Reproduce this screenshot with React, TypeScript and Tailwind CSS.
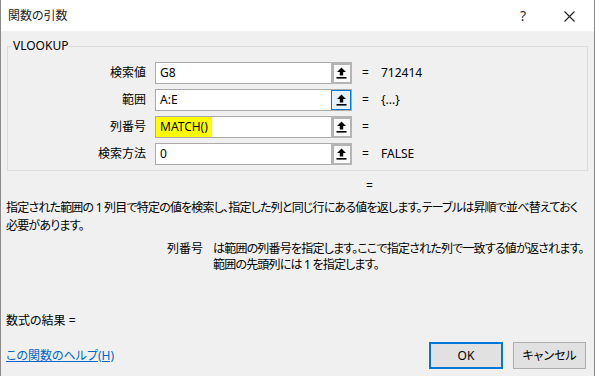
import React from 'react';

const rows = [
  { label: '検索値', value: 'G8', result: '712414', focused: false, highlight: false },
  { label: '範囲', value: 'A:E', result: '{...}', focused: true, highlight: false },
  { label: '列番号', value: 'MATCH()', result: '', focused: false, highlight: true },
  { label: '検索方法', value: '0', result: 'FALSE', focused: false, highlight: false },
];

function CollapseIcon() {
  return (
    <svg width="11" height="12" viewBox="0 0 11 12">
      <path d="M5.5 0.5 L10 5 H7.2 V8.5 H3.8 V5 H1 Z" fill="#000" />
      <rect x="0.5" y="10" width="10" height="1.6" fill="#000" />
    </svg>
  );
}

function RefEdit({ value, focused, highlight }: { value: string; focused: boolean; highlight: boolean }) {
  return (
    <div className="flex h-[22px] w-[197px]">
      <div className="flex-1 h-full border border-r-0 border-[#a9a9a9] bg-white flex items-stretch">
        <span className={`flex items-center pl-[4px] pr-[4px] text-black ${highlight ? 'bg-[#ffff00]' : ''}`}>{value}</span>
      </div>
      {focused ? (
        <div className="w-[21px] h-full border border-[#a9a9a9] border-l-0 bg-white flex items-center justify-center">
          <div className="w-[20px] h-[20px] border border-[#0078d7] bg-[#e5f1fb] flex items-center justify-center">
            <CollapseIcon />
          </div>
        </div>
      ) : (
        <div className="w-[21px] h-full bg-[#b4b4b4] flex items-center justify-center">
          <div className="w-[16px] h-[17px] bg-[#fafafa] flex items-center justify-center">
            <CollapseIcon />
          </div>
        </div>
      )}
    </div>
  );
}

export default function App() {
  return (
    <div
      className="w-[595px] h-[376px] bg-[#f0f0f0] border-x border-[#8a8a8a] flex flex-col text-[12px] text-black overflow-hidden [font-feature-settings:'palt']"
      style={{ fontFamily: '"Noto Sans", "Noto Sans CJK JP", sans-serif' }}
    >
      {/* title bar */}
      <div className="h-[31px] bg-white flex items-center pl-[7px] shrink-0">
        <span className="text-[12px] text-[#222]">関数の引数</span>
        <span className="ml-auto w-[46px] text-center text-[14px] text-[#333]">?</span>
        <span className="w-[46px] text-center mr-[2px] text-[#333]">
          <svg width="11" height="11" viewBox="0 0 11 11" className="inline-block">
            <path d="M0.5 0.5 L10.5 10.5 M10.5 0.5 L0.5 10.5" stroke="#222" strokeWidth="1.1" />
          </svg>
        </span>
      </div>

      {/* argument group */}
      <fieldset className="mt-[7px] mx-[6px] h-[133px] border border-[#dcdcdc] px-0 pb-0 pt-[8px] shrink-0">
        <legend className="ml-[4px] px-[1px] text-[12px] leading-[16px]">VLOOKUP</legend>
        <div className="flex flex-col gap-[5px]">
          {rows.map((r) => (
            <div key={r.label} className="flex items-center h-[22px]">
              <div className="w-[138px] text-right">{r.label}</div>
              <div className="ml-[9px]">
                <RefEdit value={r.value} focused={r.focused} highlight={r.highlight} />
              </div>
              <div className="ml-[10px] w-[18px]">=</div>
              <div className="ml-[1px]">{r.result}</div>
            </div>
          ))}
        </div>
      </fieldset>

      {/* description */}
      <div className="pl-[365px] mt-[7px] leading-[16px]">=</div>
      <p className="pl-[5px] mt-[5px] leading-[18px] whitespace-nowrap tracking-[-0.8px]">
        指定された範囲の 1 列目で特定の値を検索し、指定した列と同じ行にある値を返します。テーブルは昇順で並べ替えておく
        <br />
        必要があります。
      </p>
      <div className="flex mt-[6px] leading-[16px]">
        <div className="w-[202px] shrink-0 text-right">列番号</div>
        <p className="ml-[10px] whitespace-nowrap tracking-[-0.8px]">
          は範囲の列番号を指定します。ここで指定された列で一致する値が返されます。
          <br />
          範囲の先頭列には 1 を指定します。
        </p>
      </div>

      <div className="pl-[5px] mt-[40px] leading-[16px]">数式の結果 =</div>

      <div className="flex items-center mt-[13px] pl-[5px] pr-[8px]">
        <span className="text-[#0066cc] underline">この関数のヘルプ(H)</span>
        <button className="ml-auto w-[74px] h-[27px] border-2 border-[#0078d7] bg-[#e1e1e1]">OK</button>
        <button className="ml-[10px] w-[73px] h-[27px] border border-[#adadad] bg-[#e1e1e1]">キャンセル</button>
      </div>
    </div>
  );
}
